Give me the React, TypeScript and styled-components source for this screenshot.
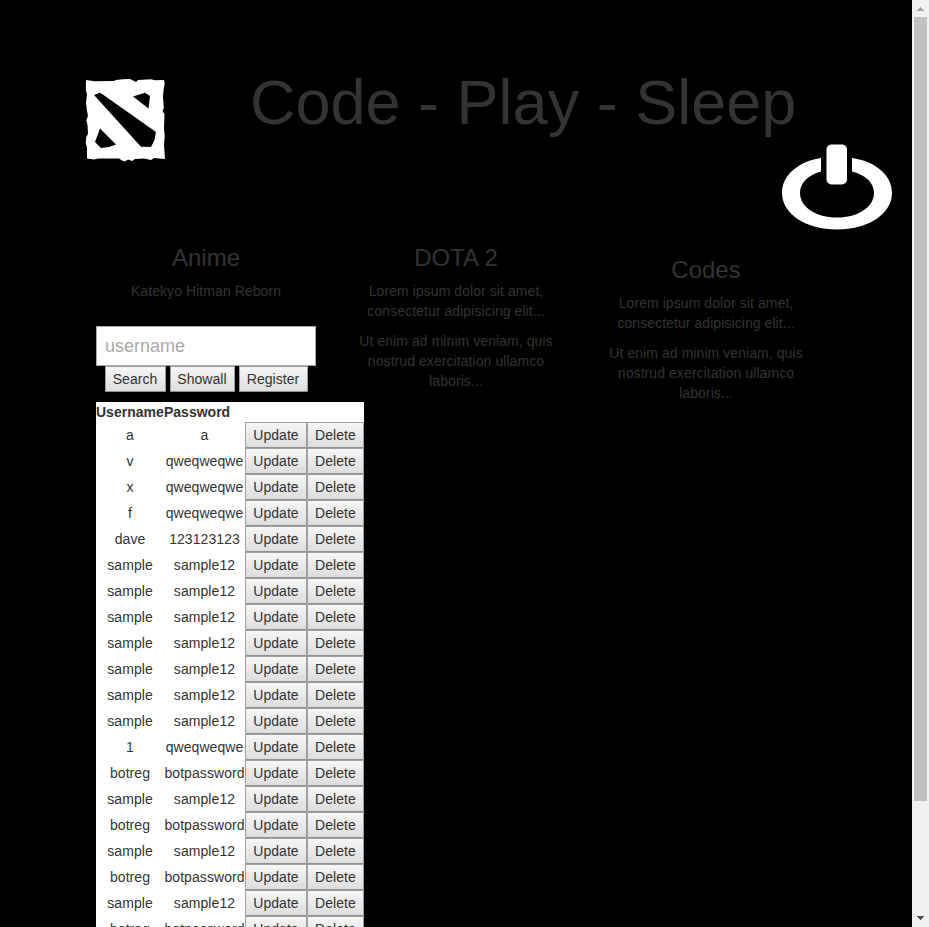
import React from 'react';
import styled, { createGlobalStyle } from 'styled-components';

const GlobalStyle = createGlobalStyle`
  * { box-sizing: border-box; }
  html, body { margin: 0; background: #000; overflow: hidden; }
  body { font: 14px/20px "Liberation Sans", Arial, sans-serif; color: #333; }
`;

const Viewport = styled.div`
  display: flex;
  height: 927px;
  overflow: hidden;
  background: #000;
`;

const Page = styled.main`
  width: 912px;
  height: 927px;
  overflow: hidden;
`;

const Header = styled.header`
  display: grid;
  grid-template-columns: 80px minmax(0, 1fr) 110px;
  height: 245px;
  padding: 0 20px 0 85px;
`;

const LogoMark = styled.svg`
  display: block;
  width: 81px;
  height: 84px;
  margin-top: 78px;
`;

const PowerMark = styled.svg`
  display: block;
  width: 110px;
  height: 87px;
  margin-top: 144px;
`;

const Title = styled.h1`
  margin: 68px 0 0;
  padding-left: 85px;
  font-size: 63px;
  line-height: 69px;
  font-weight: 400;
  white-space: nowrap;
`;

const Columns = styled.div`
  display: grid;
  grid-template-columns: repeat(3, 250px);
  margin-left: 81px;
`;

const Column = styled.section<{ $drop?: number }>`
  padding: ${({ $drop = 0 }) => $drop}px 10px 0 15px;
  padding-right: 15px;
  text-align: center;
`;

const Heading = styled.h3`
  margin: 0 0 10px;
  font-size: 24px;
  line-height: 26px;
  font-weight: 400;
`;

const Text = styled.p`
  margin: 0 0 10px;
  letter-spacing: 0.07px;
`;

const SearchForm = styled.form`
  margin: 25px 0 10px;
`;

const SearchInput = styled.input`
  display: block;
  width: 220px;
  height: 40px;
  padding: 0 8px;
  border: 1px solid #a9a9a9;
  border-radius: 0;
  background: #fff;
  color: #333;
  font: 18px/24px "Liberation Sans", Arial, sans-serif;
  outline: none;
  &::placeholder { color: #a9a9a9; opacity: 1; }
`;

const Actions = styled.div`
  display: flex;
  justify-content: center;
  gap: 4px;
`;

const Button = styled.button<{ $width: number }>`
  display: block;
  width: ${({ $width }) => $width}px;
  height: 26px;
  padding: 0;
  border: 1px solid #a0a0a0;
  border-bottom-color: #8f8f8f;
  border-radius: 1px;
  background: linear-gradient(#f6f6f6, #dddddd);
  color: #333;
  font: 14px/20px "Liberation Sans", Arial, sans-serif;
  letter-spacing: 0.05px;
`;

const AccountTable = styled.table`
  width: 268px;
  table-layout: fixed;
  border-collapse: collapse;
  background: #fff;
`;

const HeadCell = styled.th<{ $width: number }>`
  width: ${({ $width }) => $width}px;
  height: 20px;
  padding: 0;
  text-align: left;
`;

const Cell = styled.td`
  height: 26px;
  padding: 0;
  white-space: nowrap;
  letter-spacing: 0.07px;
`;

const Scrollbar = styled.aside`
  display: flex;
  flex-direction: column;
  justify-content: space-between;
  width: 17px;
  height: 927px;
  background: #f1f1f1;
`;

const Arrow = styled.svg`
  display: block;
  width: 17px;
  height: 17px;
`;

const Thumb = styled.div`
  width: 13px;
  height: 784px;
  margin: 0 2px auto;
  background: #c1c1c1;
`;

const accounts: [string, string][] = [
  ['a', 'a'],
  ['v', 'qweqweqwe'],
  ['x', 'qweqweqwe'],
  ['f', 'qweqweqwe'],
  ['dave', '123123123'],
  ...Array.from({ length: 7 }, (): [string, string] => ['sample', 'sample12']),
  ['1', 'qweqweqwe'],
  ['botreg', 'botpassword'],
  ['sample', 'sample12'],
  ['botreg', 'botpassword'],
  ['sample', 'sample12'],
  ['botreg', 'botpassword'],
  ['sample', 'sample12'],
  ['botreg', 'botpassword'],
];

function Logo() {
  return (
    <LogoMark viewBox="0 0 81 84" aria-label="Dota">
      <path
        fill="#fff"
        fillRule="evenodd"
        d="M1 2 10 3.3 29 3 31 2 38 1.3 45 1 49 3 51 4 53 2 66 1.3 70 2.3 79 2 79.7 5 78.5 12 78 19 78.8 30 77.5 33 79.5 36 79 50 79.7 58 79 67 80 81 69 80 66 82 59 80.5 50 81 47 83 43 81.5 40 83.5 37 82.5 34 80.5 13 80.5 9 81.5 2 80.5 2 70 .8 65 1.2 59 3 56 2.5 47 1.3 42 3 38 2 33 1 25 2 16 .8 12ZM9 17 15 14.7 20 18 71 54 69.5 62 66 69 56 68.7ZM48 18.5 60 14.7 65 18 63.5 30.5ZM15 50.5 31 66.5 24 69 16 70 10 64Z"
      />
    </LogoMark>
  );
}

function Power() {
  return (
    <PowerMark viewBox="0 0 110 87" aria-label="Log out">
      <path
        fill="#fff"
        d="M39 14V27.5C26 31 18 39 18 49C18 63 34 73.5 55 73.5C76 73.5 92 63 92 49C92 39 84 31 70 27.5V14C93 17 110 31 110 49C110 70 86 85.5 55 85.5C24 85.5 0 70 0 49C0 31 17 17 39 14Z"
      />
      <rect x="44.5" y="0.5" width="20.5" height="40" rx="5" fill="#fff" />
    </PowerMark>
  );
}

function Lorem() {
  return (
    <>
      <Text>Lorem ipsum dolor sit amet, consectetur adipisicing elit...</Text>
      <Text>Ut enim ad minim veniam, quis nostrud exercitation ullamco laboris...</Text>
    </>
  );
}

export default function App() {
  return (
    <>
      <GlobalStyle />
      <Viewport>
        <Page>
          <Header>
            <Logo />
            <Title>Code - Play - Sleep</Title>
            <Power />
          </Header>
          <Columns>
            <Column>
              <Heading>Anime</Heading>
              <Text>Katekyo Hitman Reborn</Text>
              <SearchForm>
                <SearchInput placeholder="username" />
                <Actions>
                  <Button type="button" $width={61}>Search</Button>
                  <Button type="button" $width={65}>Showall</Button>
                  <Button type="button" $width={69}>Register</Button>
                </Actions>
              </SearchForm>
              <AccountTable>
                <thead>
                  <tr>
                    <HeadCell $width={68}>Username</HeadCell>
                    <HeadCell $width={81}>Password</HeadCell>
                    <HeadCell $width={62} />
                    <HeadCell $width={57} />
                  </tr>
                </thead>
                <tbody>
                  {accounts.map(([name, password], i) => (
                    <tr key={i}>
                      <Cell>{name}</Cell>
                      <Cell>{password}</Cell>
                      <Cell><Button $width={62}>Update</Button></Cell>
                      <Cell><Button $width={57}>Delete</Button></Cell>
                    </tr>
                  ))}
                </tbody>
              </AccountTable>
            </Column>
            <Column>
              <Heading>DOTA 2</Heading>
              <Lorem />
            </Column>
            <Column $drop={12}>
              <Heading>Codes</Heading>
              <Lorem />
            </Column>
          </Columns>
        </Page>
        <Scrollbar>
          <Arrow viewBox="0 0 17 17" shapeRendering="crispEdges">
            <path d="M5 11h7v-1h-1v-1h-1v-1h-1v-1h-1v1h-1v1h-1v1h-1z" fill="#a3a3a3" />
          </Arrow>
          <Thumb />
          <Arrow viewBox="0 0 17 17" shapeRendering="crispEdges">
            <path d="M5 6h7v1h-1v1h-1v1h-1v1h-1v-1h-1v-1h-1v-1h-1z" fill="#505050" />
          </Arrow>
        </Scrollbar>
      </Viewport>
    </>
  );
}
